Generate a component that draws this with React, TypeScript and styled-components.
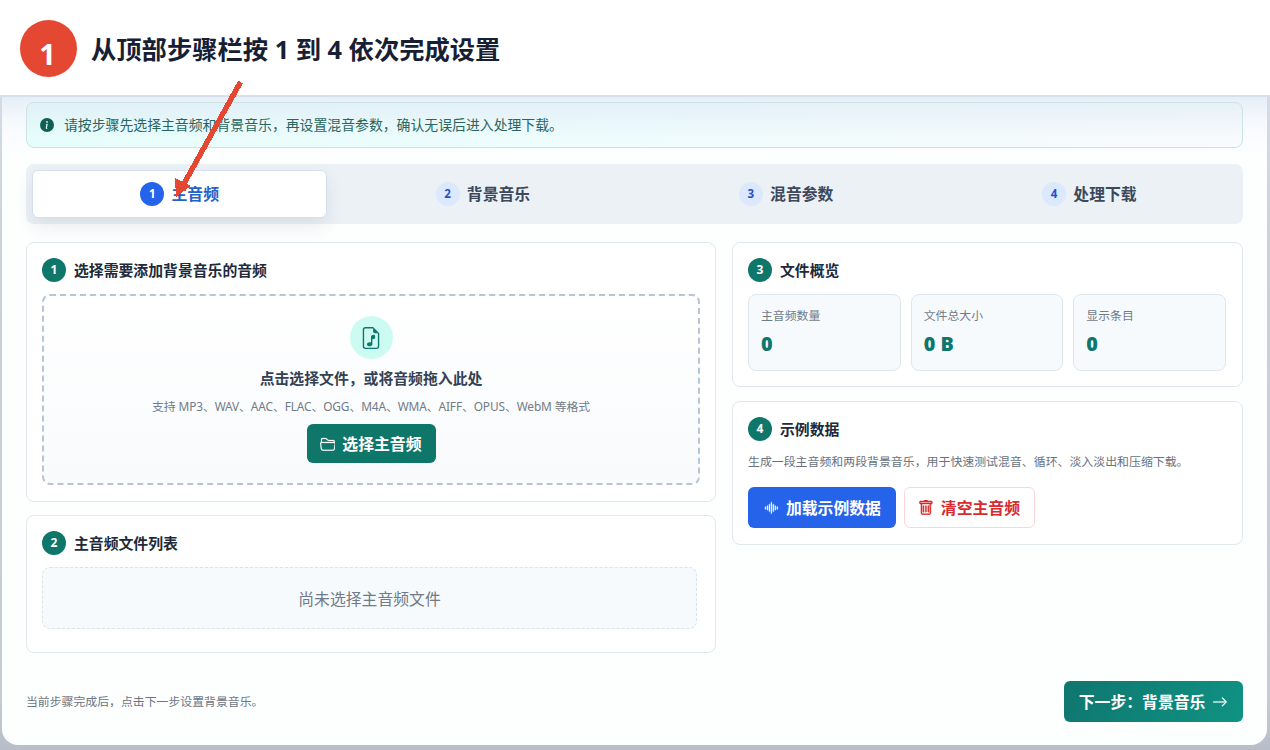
import React from 'react';
import styled, { createGlobalStyle, css } from 'styled-components';
import {
  BsArrowRight,
  BsFileEarmarkMusic,
  BsFolder2Open,
  BsInfoCircleFill,
  BsSoundwave,
  BsTrash,
} from 'react-icons/bs';

const GlobalStyle = createGlobalStyle`
  *, *::before, *::after { box-sizing: border-box; }
  body {
    margin: 0;
    background: #fff;
    color: #1e293b;
    font-family: "Noto Sans", "Noto Sans CJK SC", sans-serif;
    font-size: 15.84px;
  }
`;

const Page = styled.div`
  position: relative;
  display: flex;
  flex-direction: column;
  width: 1270px;
  height: 750px;
  overflow: hidden;
`;

const Caption = styled.header`
  display: flex;
  align-items: center;
  gap: 14px;
  flex: none;
  height: 95px;
  padding: 2px 20px 0;
`;

const CaptionBadge = styled.span`
  display: flex;
  align-items: center;
  justify-content: center;
  width: 57px;
  height: 57px;
  padding: 10px 2px 0 0;
  border-radius: 50%;
  background: #e54832;
  color: #fff;
  font-size: 29px;
  font-weight: 700;
  line-height: 1;
`;

const CaptionTitle = styled.h1`
  margin: 0;
  color: #172033;
  font-size: 25.3px;
  font-weight: 700;
  line-height: 36px;
  white-space: nowrap;
`;

const Stage = styled.div`
  flex: 1;
  min-height: 0;
  border-top: 2px solid #d7dfeb;
  padding: 0 3px 5px 2px;
  background: linear-gradient(180deg, #d3dbe7 0, #cbd1da 160px, #c6ccd5 600px, #b7bec9 653px);
`;

const Panel = styled.main`
  height: 648px;
  padding: 5px 24px 0;
  border-radius: 0 0 16px 16px;
  background:
    linear-gradient(180deg, rgba(225, 235, 246, 0.85) 0, rgba(240, 245, 251, 0.5) 24px, rgba(255, 255, 255, 0) 58px),
    #fdfefe;
`;

const Notice = styled.div`
  display: flex;
  align-items: center;
  gap: 10px;
  height: 46px;
  padding: 0 13px 1px;
  border: 1px solid #cce3e6;
  border-radius: 8px;
  background:
    linear-gradient(180deg, rgba(222, 234, 246, 0.65), rgba(240, 250, 253, 0) 80%),
    linear-gradient(90deg, #e6fdfb, #effcfd 50%, #f8fafc);
  color: #28655f;
  font-size: 13.86px;

  svg {
    width: 14px;
    height: 14px;
    color: #115e55;
  }

  span {
    padding-bottom: 1px;
  }
`;

const Tabs = styled.nav`
  display: grid;
  grid-template-columns: repeat(4, 1fr);
  gap: 8px;
  height: 60px;
  margin-top: 16px;
  padding: 6px;
  border-radius: 8px;
  background: #ecf1f6;
`;

const Tab = styled.button<{ $active?: boolean }>`
  display: flex;
  align-items: center;
  justify-content: center;
  gap: 7.3px;
  padding: 0 0 1px;
  border: 1px solid transparent;
  border-radius: 6px;
  background: transparent;
  color: #3c485b;
  font: inherit;
  font-weight: 700;
  ${({ $active }) =>
    $active &&
    css`
      border-color: #d3dfee;
      background: #fff;
      color: #2462c8;
      box-shadow: 0 8px 18px rgba(15, 60, 80, 0.09);
    `}
`;

const Num = styled.span<{ $tone: 'green' | 'blue' | 'pale' }>`
  display: inline-flex;
  align-items: center;
  justify-content: center;
  flex: none;
  width: 24px;
  height: 24px;
  border-radius: 50%;
  font-size: ${({ $tone }) => ($tone === 'green' ? '12px' : '11.5px')};
  font-weight: 700;
  line-height: 1;
  color: ${({ $tone }) => ($tone === 'pale' ? '#2450d0' : '#fff')};
  background: ${({ $tone }) => ({ green: '#0f766a', blue: '#2563eb', pale: '#dbe8fe' })[$tone]};
`;

const Columns = styled.div`
  display: grid;
  grid-template-columns: 690px 511px;
  gap: 16px;
  align-items: start;
  margin-top: 18px;
`;

const Column = styled.div<{ $gap: number }>`
  display: flex;
  flex-direction: column;
  gap: ${({ $gap }) => $gap}px;
`;

const Card = styled.section<{ $height: number }>`
  height: ${({ $height }) => $height}px;
  padding: 15px 15px 0;
  border: 1px solid #e1e8ed;
  border-radius: 8px;
  background: #fff;
`;

const CardTitle = styled.h2`
  display: flex;
  align-items: center;
  gap: 8px;
  height: 24px;
  margin: 0;
  color: #202a3a;
  font-size: 14.85px;
  font-weight: 700;
`;

const CardTitleText = styled.span`
  padding-bottom: 2px;
`;

const DropZone = styled.div`
  display: flex;
  flex-direction: column;
  align-items: center;
  height: 191px;
  margin-top: 12px;
  padding-top: 20px;
  border: 2px dashed #b5c4d6;
  border-radius: 8px;
  background: linear-gradient(180deg, #fff, #f8fafc);
`;

const DropIcon = styled.span`
  display: flex;
  align-items: center;
  justify-content: center;
  width: 43px;
  height: 43px;
  border-radius: 50%;
  background: #ccfbf1;
  color: #0f766e;

  svg {
    width: 22px;
    height: 22px;
  }
`;

const DropTitle = styled.div`
  margin-top: 8px;
  color: #334155;
  font-size: 14.85px;
  font-weight: 700;
  line-height: 22px;
`;

const DropHint = styled.div`
  margin: 7px 0 8px;
  color: #727b88;
  font-size: 11.88px;
  letter-spacing: -0.12px;
  line-height: 20px;
`;

const Button = styled.button<{ $kind: 'primary' | 'blue' | 'danger' | 'next' }>`
  display: inline-flex;
  align-items: center;
  justify-content: center;
  gap: 7px;
  flex: none;
  width: ${({ $kind }) => ({ primary: 129, blue: 148, danger: 131, next: 179 })[$kind]}px;
  height: ${({ $kind }) => ($kind === 'primary' ? 39 : 41)}px;
  padding: 0 ${({ $kind }) => ($kind === 'primary' || $kind === 'danger' ? 1 : 0)}px 1px 0;
  border: 1px solid ${({ $kind }) => ($kind === 'danger' ? '#fbd5d8' : 'transparent')};
  border-radius: 6px;
  background: ${({ $kind }) =>
    ({
      primary: '#0f766a',
      blue: '#2563eb',
      danger: '#fff',
      next: 'linear-gradient(120deg, #0f766e, #0f9384) border-box',
    })[$kind]};
  color: ${({ $kind }) => ($kind === 'danger' ? '#d72b2f' : '#fff')};
  font: inherit;
  font-weight: 700;
  white-space: nowrap;

  svg {
    flex: none;
    width: 15.8px;
    height: 15.8px;
    margin-top: 1px;
    stroke: currentColor;
    stroke-width: ${({ $kind }) => ($kind === 'danger' ? 0.5 : 0.25)};
  }
`;

const EmptyList = styled.div`
  display: flex;
  align-items: center;
  justify-content: center;
  width: 655px;
  height: 62px;
  margin-top: 12px;
  border: 1px dashed #d9e3ec;
  border-radius: 8px;
  background: #f7fafd;
  color: #707a88;
`;

const Stats = styled.div`
  display: grid;
  grid-template-columns: repeat(3, 1fr);
  gap: 10px;
  width: 478px;
  margin-top: 12px;
`;

const Stat = styled.div`
  height: 77px;
  padding: 11px 12px 0;
  border: 1px solid #dfe7ee;
  border-radius: 8px;
  background: #f7fafd;
`;

const StatLabel = styled.div`
  color: #727b88;
  font-size: 11.88px;
  line-height: 19px;
`;

const StatValue = styled.div`
  margin-top: 5px;
  color: #0f766e;
  font-size: 19.8px;
  font-weight: 900;
  line-height: 27px;
`;

const Description = styled.p`
  margin: 9px 0 15px;
  color: #687280;
  font-size: 11.92px;
  line-height: 22px;
`;

const Actions = styled.div`
  display: flex;
  gap: 8px;
`;

const Footer = styled.footer`
  display: flex;
  align-items: center;
  justify-content: space-between;
  height: 41px;
  margin-top: 28px;
  color: #6c7583;
  font-size: 11.88px;

  ${Button} {
    font-size: 15.84px;
  }
`;

const FooterHint = styled.span`
  padding-bottom: 3px;
`;

const Pointer = styled.svg`
  position: absolute;
  left: 165px;
  top: 75px;
  pointer-events: none;
`;

const steps = ['主音频', '背景音乐', '混音参数', '处理下载'];

const stats = [
  { label: '主音频数量', value: '0' },
  { label: '文件总大小', value: '0 B' },
  { label: '显示条目', value: '0' },
];

const Heading = ({ n, children }: { n: number; children: React.ReactNode }) => (
  <CardTitle>
    <Num $tone="green">{n}</Num>
    <CardTitleText>{children}</CardTitleText>
  </CardTitle>
);

export default function App() {
  return (
    <Page>
      <GlobalStyle />
      <Caption>
        <CaptionBadge>1</CaptionBadge>
        <CaptionTitle>从顶部步骤栏按 1 到 4 依次完成设置</CaptionTitle>
      </Caption>
      <Stage>
        <Panel>
          <Notice>
            <BsInfoCircleFill />
            <span>请按步骤先选择主音频和背景音乐，再设置混音参数，确认无误后进入处理下载。</span>
          </Notice>
          <Tabs>
            {steps.map((label, i) => (
              <Tab key={label} $active={i === 0}>
                <Num $tone={i === 0 ? 'blue' : 'pale'}>{i + 1}</Num>
                {label}
              </Tab>
            ))}
          </Tabs>
          <Columns>
            <Column $gap={13}>
              <Card $height={260}>
                <Heading n={1}>选择需要添加背景音乐的音频</Heading>
                <DropZone>
                  <DropIcon>
                    <BsFileEarmarkMusic />
                  </DropIcon>
                  <DropTitle>点击选择文件，或将音频拖入此处</DropTitle>
                  <DropHint>支持 MP3、WAV、AAC、FLAC、OGG、M4A、WMA、AIFF、OPUS、WebM 等格式</DropHint>
                  <Button $kind="primary">
                    <BsFolder2Open />
                    选择主音频
                  </Button>
                </DropZone>
              </Card>
              <Card $height={138}>
                <Heading n={2}>主音频文件列表</Heading>
                <EmptyList>尚未选择主音频文件</EmptyList>
              </Card>
            </Column>
            <Column $gap={14}>
              <Card $height={145}>
                <Heading n={3}>文件概览</Heading>
                <Stats>
                  {stats.map(({ label, value }) => (
                    <Stat key={label}>
                      <StatLabel>{label}</StatLabel>
                      <StatValue>{value}</StatValue>
                    </Stat>
                  ))}
                </Stats>
              </Card>
              <Card $height={144}>
                <Heading n={4}>示例数据</Heading>
                <Description>生成一段主音频和两段背景音乐，用于快速测试混音、循环、淡入淡出和压缩下载。</Description>
                <Actions>
                  <Button $kind="blue">
                    <BsSoundwave />
                    加载示例数据
                  </Button>
                  <Button $kind="danger">
                    <BsTrash />
                    清空主音频
                  </Button>
                </Actions>
              </Card>
            </Column>
          </Columns>
          <Footer>
            <FooterHint>当前步骤完成后，点击下一步设置背景音乐。</FooterHint>
            <Button $kind="next">
              下一步：背景音乐
              <BsArrowRight />
            </Button>
          </Footer>
        </Panel>
      </Stage>
      <Pointer width="90" height="130" viewBox="165 75 90 130" shapeRendering="crispEdges">
        <path d="M240.5 82L181 189" stroke="#e54832" strokeWidth="5.4" />
        <path d="M175 178L190.500 186L176 197Z" fill="#e54832" />
      </Pointer>
    </Page>
  );
}
